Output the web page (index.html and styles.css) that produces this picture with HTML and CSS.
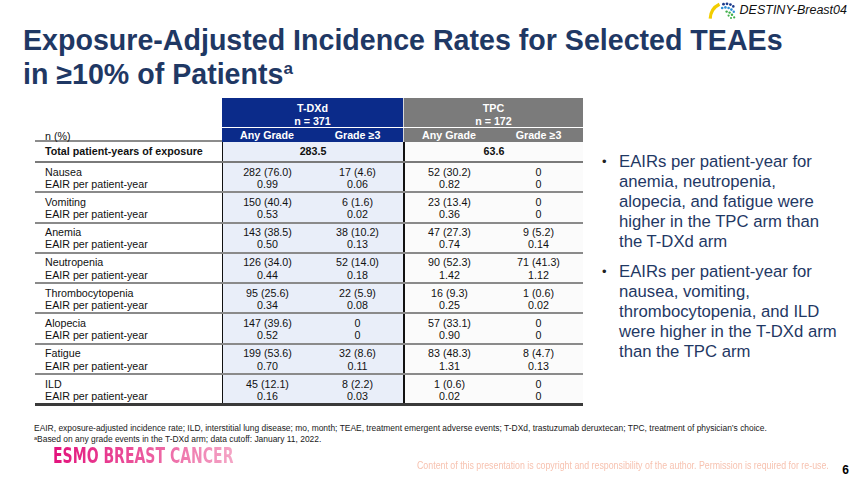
FILE: index.html
```html
<!DOCTYPE html>
<html>
<head>
<meta charset="utf-8">
<link rel="stylesheet" href="styles.css">
</head>
<body>
<div class="slide">
  <div class="topbar">
    <div class="brand">
      <svg viewBox="0 0 28 17" class="brand-icon">
        <path d="M2.2 16.6 Q2.6 6.5 11.5 2.2" fill="none" stroke="#f2cd00" stroke-width="3.2"/>
        <g fill="#1b3a8c">
          <circle cx="15.5" cy="2.2" r="1.4"/><circle cx="19" cy="1.8" r="1.4"/><circle cx="22.4" cy="2.6" r="1.4"/><circle cx="25.3" cy="4.4" r="1.3"/>
        </g>
        <g fill="#2f8fd6">
          <circle cx="14.2" cy="6" r="1.3"/><circle cx="17.4" cy="5.4" r="1.3"/><circle cx="20.6" cy="6" r="1.3"/><circle cx="23.4" cy="7.6" r="1.3"/><circle cx="25.8" cy="9.8" r="1.2"/>
        </g>
        <g fill="#3fae49">
          <circle cx="18.6" cy="9.6" r="1.2"/><circle cx="21.6" cy="10.6" r="1.2"/><circle cx="24" cy="12.8" r="1.2"/><circle cx="20.6" cy="13.6" r="1.1"/><circle cx="26.2" cy="15.4" r="1.1"/><circle cx="23" cy="16" r="1"/>
        </g>
      </svg>
      <span class="brand-name">DESTINY-Breast04</span>
    </div>
  </div>

  <h1 class="title">Exposure-Adjusted Incidence Rates for Selected TEAEs<br>in ≥10% of Patients<sup>a</sup></h1>

  <div class="content">
    <div class="tbl">
      <div class="thead">
        <div class="th-label"><span>n (%)</span></div>
        <div class="th-grp th-tdxd">T-DXd<br>n = 371</div>
        <div class="th-grp th-tpc">TPC<br>n = 172</div>
        <div class="th-sub th-tdxd">Any Grade</div>
        <div class="th-sub th-tdxd">Grade ≥3</div>
        <div class="th-sub th-tpc th-tpc-first">Any Grade</div>
        <div class="th-sub th-tpc">Grade ≥3</div>
      </div>
      <div class="row total">
        <div class="lab">Total patient-years of exposure</div>
        <div class="c tdxd span2">283.5</div>
        <div class="c tpc span2">63.6</div>
      </div>
      <div class="row grp">
        <div class="lab">Nausea<br>EAIR per patient-year</div>
        <div class="c tdxd">282 (76.0)<br>0.99</div>
        <div class="c tdxd2">17 (4.6)<br>0.06</div>
        <div class="c tpc">52 (30.2)<br>0.82</div>
        <div class="c tpc2">0<br>0</div>
      </div>
      <div class="row grp">
        <div class="lab">Vomiting<br>EAIR per patient-year</div>
        <div class="c tdxd">150 (40.4)<br>0.53</div>
        <div class="c tdxd2">6 (1.6)<br>0.02</div>
        <div class="c tpc">23 (13.4)<br>0.36</div>
        <div class="c tpc2">0<br>0</div>
      </div>
      <div class="row grp">
        <div class="lab">Anemia<br>EAIR per patient-year</div>
        <div class="c tdxd">143 (38.5)<br>0.50</div>
        <div class="c tdxd2">38 (10.2)<br>0.13</div>
        <div class="c tpc">47 (27.3)<br>0.74</div>
        <div class="c tpc2">9 (5.2)<br>0.14</div>
      </div>
      <div class="row grp">
        <div class="lab">Neutropenia<br>EAIR per patient-year</div>
        <div class="c tdxd">126 (34.0)<br>0.44</div>
        <div class="c tdxd2">52 (14.0)<br>0.18</div>
        <div class="c tpc">90 (52.3)<br>1.42</div>
        <div class="c tpc2">71 (41.3)<br>1.12</div>
      </div>
      <div class="row grp">
        <div class="lab">Thrombocytopenia<br>EAIR per patient-year</div>
        <div class="c tdxd">95 (25.6)<br>0.34</div>
        <div class="c tdxd2">22 (5.9)<br>0.08</div>
        <div class="c tpc">16 (9.3)<br>0.25</div>
        <div class="c tpc2">1 (0.6)<br>0.02</div>
      </div>
      <div class="row grp">
        <div class="lab">Alopecia<br>EAIR per patient-year</div>
        <div class="c tdxd">147 (39.6)<br>0.52</div>
        <div class="c tdxd2">0<br>0</div>
        <div class="c tpc">57 (33.1)<br>0.90</div>
        <div class="c tpc2">0<br>0</div>
      </div>
      <div class="row grp">
        <div class="lab">Fatigue<br>EAIR per patient-year</div>
        <div class="c tdxd">199 (53.6)<br>0.70</div>
        <div class="c tdxd2">32 (8.6)<br>0.11</div>
        <div class="c tpc">83 (48.3)<br>1.31</div>
        <div class="c tpc2">8 (4.7)<br>0.13</div>
      </div>
      <div class="row grp last">
        <div class="lab">ILD<br>EAIR per patient-year</div>
        <div class="c tdxd">45 (12.1)<br>0.16</div>
        <div class="c tdxd2">8 (2.2)<br>0.03</div>
        <div class="c tpc">1 (0.6)<br>0.02</div>
        <div class="c tpc2">0<br>0</div>
      </div>
    </div>

    <ul class="bullets">
      <li><span class="dot">•</span><span>EAIRs per patient-year for anemia, neutropenia, alopecia, and fatigue were higher in the TPC arm than the T-DXd arm</span></li>
      <li><span class="dot">•</span><span>EAIRs per patient-year for nausea, vomiting, thrombocytopenia, and ILD were higher in the T-DXd arm than the TPC arm</span></li>
    </ul>
  </div>

  <div class="notes">
    <p>EAIR, exposure-adjusted incidence rate; ILD, interstitial lung disease; mo, month; TEAE, treatment emergent adverse events; T-DXd, trastuzumab deruxtecan; TPC, treatment of physician’s choice.</p>
    <p><sup>a</sup>Based on any grade events in the T-DXd arm; data cutoff: January 11, 2022.</p>
  </div>

  <div class="bottom">
    <div class="esmo-box"><span class="esmo">ESMO BREAST CANCER</span></div>
    <div class="copy-box"><span class="copy">Content of this presentation is copyright and responsibility of the author. Permission is required for re-use.</span></div>
    <div class="pnum">6</div>
  </div>
</div>
</body>
</html>
```

FILE: styles.css
```css
* { box-sizing: border-box; }
body {
  margin: 0;
  background: #ffffff;
  font-family: "Liberation Sans", Arial, sans-serif;
}
.slide {
  width: 852px;
  height: 482px;
  overflow: hidden;
  background: #ffffff;
}

/* top brand */
.topbar {
  display: flex;
  justify-content: flex-end;
  height: 22px;
  padding-right: 5px;
}
.brand {
  display: flex;
  align-items: center;
  gap: 4px;
  height: 19px;
  padding-top: 1px;
}
.brand-icon { width: 28px; height: 17px; display: block; }
.brand-name {
  font-style: italic;
  font-size: 12.5px;
  color: #111;
}

/* title */
.title {
  margin: 1px 0 0 0;
  padding-left: 23px;
  font-size: 28.6px;
  line-height: 34px;
  font-weight: 700;
  color: #1f3864;
}
.title sup {
  font-size: 17px;
  line-height: 0;
  vertical-align: 10px;
}

/* content */
.content {
  display: flex;
  align-items: flex-start;
  margin-top: 7px;
}

.tbl {
  margin-left: 35px;
  width: 548px;
  font-size: 10.7px;
  color: #111;
}
.thead {
  display: grid;
  grid-template-columns: 187px 90px 91px 91px 89px;
  grid-template-rows: 29px 14px;
  row-gap: 1px;
}
.th-label {
  grid-row: 1 / span 2;
  display: flex;
  align-items: flex-end;
  padding-left: 10px;
  border-bottom: 2px solid #8c8c8c;
}
.th-label span { line-height: 12px; margin-bottom: -2px; }
.th-grp {
  grid-column: span 2;
  color: #fff;
  font-weight: 700;
  text-align: center;
  line-height: 12.3px;
  padding-top: 4.3px;
}
.th-sub {
  color: #fff;
  font-weight: 700;
  text-align: center;
  line-height: 14px;
}
.th-tdxd { background: #0b2b8a; }
.th-tpc { background: #7b7b7b; }
.th-grp.th-tpc, .th-tpc-first { border-left: 1px solid #d8d8d8; }

.row {
  display: grid;
  grid-template-columns: 187px 90px 91px 91px 89px;
}
.total {
  height: 21px;
  font-weight: 700;
  border-bottom: 2px solid #7a7a7a;
}
.total .lab, .total .c { line-height: 19px; }
.span2 { grid-column: span 2; }

.lab { padding-left: 10px; background: #fff; }
.c { text-align: center; }
.tdxd { background: #e9eef9; border-left: 1px solid #111; }
.tdxd2 { background: #e9eef9; }
.tpc { background: #fbfbfb; border-left: 2px solid #111; }
.tpc2 { background: #fbfbfb; }

.grp {
  height: 30.3px;
  border-bottom: 2px solid #8a8a8a;
}
.grp .lab, .grp .c {
  line-height: 12.3px;
  padding-top: 2.6px;
}
.grp.last { border-bottom: 3px solid #3a3a3a; height: 31.3px; }

/* bullets */
.bullets {
  list-style: none;
  margin: 54px 0 0 19px;
  padding: 0;
  width: 241px;
  font-size: 16.7px;
  line-height: 20px;
  color: #1f3864;
}
.bullets li { display: flex; }
.bullets li + li { margin-top: 10px; }
.dot { flex: 0 0 17px; font-size: 13px; color: #222; }

/* notes */
.notes {
  margin-top: 17px;
  padding-left: 34px;
  font-size: 8.45px;
  line-height: 11px;
  color: #1a1a1a;
}
.notes p { margin: 0; white-space: nowrap; }
.notes sup { font-size: 5.5px; line-height: 0; vertical-align: 2.5px; }

/* bottom */
.bottom {
  display: flex;
  align-items: flex-start;
  height: 36px;
  margin-top: 2px;
}
.esmo-box { width: 179px; margin-left: 53px; height: 18px; }
.esmo {
  display: inline-block;
  white-space: nowrap;
  font-family: "DejaVu Sans Condensed", "DejaVu Sans", sans-serif;
  font-weight: 700;
  font-size: 21.5px;
  line-height: 17px;
  transform: scaleX(0.725);
  transform-origin: left center;
  background: linear-gradient(90deg, #e3127c 0%, #ec5ea0 55%, #f4a6c6 100%);
  -webkit-background-clip: text;
  background-clip: text;
  color: transparent;
}
.copy-box { width: 413px; margin-left: 185px; margin-top: 8px; }
.copy {
  display: inline-block;
  white-space: nowrap;
  font-size: 10.5px;
  line-height: 12px;
  color: #f7c2b0;
  transform: scaleX(0.84);
  transform-origin: left center;
}
.pnum {
  margin-left: auto;
  margin-right: 3px;
  margin-top: 16px;
  font-size: 12px;
  font-weight: 700;
  color: #000;
}
```
